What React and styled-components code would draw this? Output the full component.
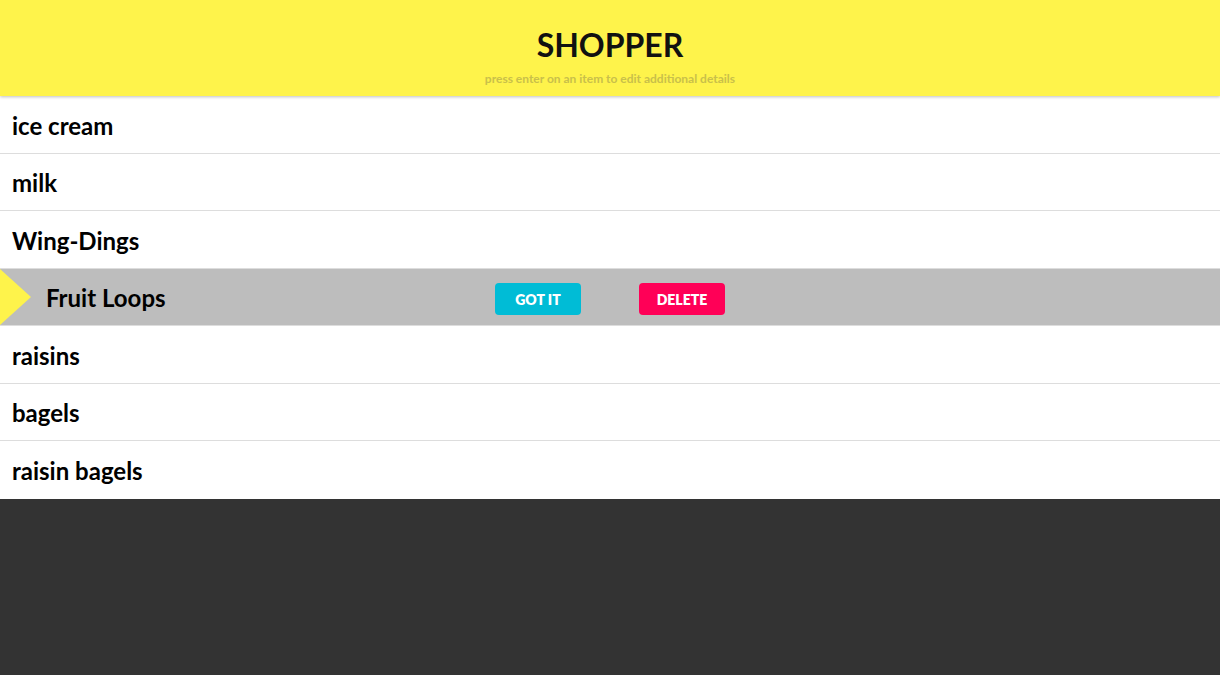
import React from "react";
import styled, { createGlobalStyle } from "styled-components";

const Global = createGlobalStyle`
  html, body { margin: 0; padding: 0; background: #333333; }
  body { font-family: Lato, "Open Sans", sans-serif; }
  * { box-sizing: border-box; }
`;

const Header = styled.header`
  position: relative;
  z-index: 1;
  height: 96px;
  background: #fef34b;
  box-shadow: 0 1px 3px rgba(0, 0, 0, 0.25);
  display: flex;
  flex-direction: column;
  align-items: center;
  padding-top: 26px;
`;

const Title = styled.h1`
  margin: 0;
  font-size: 32px;
  line-height: 38px;
  font-weight: 700;
  color: #111;
  letter-spacing: 0;
`;

const Subtitle = styled.div`
  margin-top: 7px;
  font-size: 12px;
  font-weight: 700;
  color: #c9c04a;
`;

const List = styled.ul`
  list-style: none;
  margin: 0;
  padding: 0;
  background: #fff;
`;

const Row = styled.li`
  position: relative;
  height: 57.5px;
  display: flex;
  align-items: center;
  padding-top: 2px;
  padding-left: ${(p) => (p.$active ? "46px" : "12px")};
  background: ${(p) => (p.$active ? "#bdbdbd" : "#fff")};
  border-bottom: 1px solid #dddddd;
  &:last-child {
    border-bottom: none;
  }
`;

const Arrow = styled.span`
  position: absolute;
  left: 0;
  top: 0;
  width: 0;
  height: 0;
  border-top: 28.5px solid transparent;
  border-bottom: 28.5px solid transparent;
  border-left: 31px solid #fef34b;
`;

const Name = styled.span`
  font-size: 24px;
  font-weight: 700;
  color: #000;
  width: ${(p) => (p.$active ? "449px" : "auto")};
`;

const Button = styled.button`
  width: 86px;
  height: 32px;
  margin-top: 3px;
  border: none;
  border-radius: 4px;
  background: ${(p) => p.$color};
  color: #fff;
  font-family: Lato, sans-serif;
  font-weight: 800;
  font-size: 14px;
  padding: 0;
  margin-right: 58px;
  cursor: pointer;
`;

const items = [
  "ice cream",
  "milk",
  "Wing-Dings",
  "Fruit Loops",
  "raisins",
  "bagels",
  "raisin bagels",
];

export default function App() {
  return (
    <>
      <Global />
      <Header>
        <Title>SHOPPER</Title>
        <Subtitle>press enter on an item to edit additional details</Subtitle>
      </Header>
      <List>
        {items.map((it, i) => {
          const active = i === 3;
          return (
            <Row key={it} $active={active}>
              {active && <Arrow />}
              <Name $active={active}>{it}</Name>
              {active && (
                <>
                  <Button $color="#00bcd6">GOT IT</Button>
                  <Button $color="#ff0057">DELETE</Button>
                </>
              )}
            </Row>
          );
        })}
      </List>
    </>
  );
}
